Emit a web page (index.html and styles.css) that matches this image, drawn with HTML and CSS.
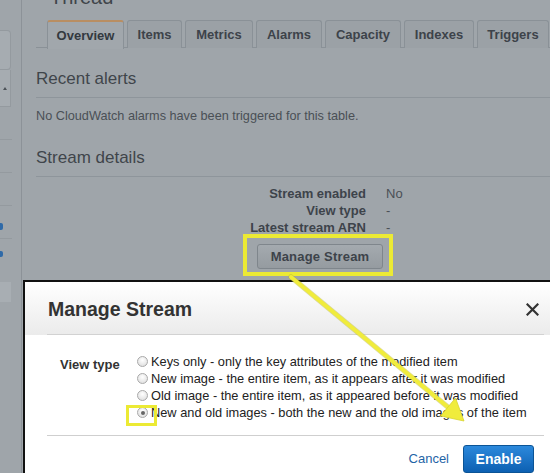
FILE: index.html
```html
<!DOCTYPE html>
<html>
<head>
<meta charset="utf-8">
<title>Manage Stream</title>
<link rel="stylesheet" href="styles.css">
</head>
<body>
<div class="page">
  <aside class="sidebar">
    <div class="sb-box sb-search"></div>
    <div class="sb-box sb-toggle"><span class="caret"></span></div>
    <div class="sb-item"></div>
    <div class="sb-item"></div>
    <div class="sb-item"></div>
    <div class="sb-item"><span class="sb-mark sb-mark-1"></span></div>
    <div class="sb-item sb-last"><span class="sb-mark sb-mark-2"></span></div>
    <div class="sb-box sb-bottom"></div>
  </aside>
  <main class="main">
    <h1 class="title">Thread</h1>
    <nav class="tabs">
      <span class="tab active">Overview</span>
      <span class="tab">Items</span>
      <span class="tab">Metrics</span>
      <span class="tab">Alarms</span>
      <span class="tab">Capacity</span>
      <span class="tab">Indexes</span>
      <span class="tab">Triggers</span>
    </nav>
    <section class="section">
      <h2 class="heading">Recent alerts</h2>
      <p class="note">No CloudWatch alarms have been triggered for this table.</p>
    </section>
    <section class="section">
      <h2 class="heading heading-2">Stream details</h2>
      <div class="kv">
        <span class="k">Stream enabled</span><span class="v">No</span>
        <span class="k">View type</span><span class="v">-</span>
        <span class="k">Latest stream ARN</span><span class="v">-</span>
      </div>
      <div class="btn-row">
        <button class="btn mark-btn">Manage Stream</button>
      </div>
    </section>
  </main>
</div>

<div class="modal">
  <header class="modal-header">
    <div class="modal-header-inner">
      <h3 class="modal-title">Manage Stream</h3>
      <svg class="close" width="13" height="13" viewBox="0 0 13 13"><path d="M1.5 1.5 L11.5 11.5 M11.5 1.5 L1.5 11.5" stroke="#333" stroke-width="2.2" stroke-linecap="square"/></svg>
    </div>
  </header>
  <div class="modal-body">
    <div class="form-row">
      <span class="form-label">View type</span>
      <div class="radios">
        <label class="radio-row"><span class="radio"></span>Keys only - only the key attributes of the modified item</label>
        <label class="radio-row"><span class="radio"></span>New image - the entire item, as it appears after it was modified</label>
        <label class="radio-row"><span class="radio"></span>Old image - the entire item, as it appeared before it was modified</label>
        <label class="radio-row"><span class="radio checked mark-radio"></span>New and old images - both the new and the old images of the item</label>
      </div>
    </div>
  </div>
  <div class="modal-divider"></div>
  <footer class="modal-footer">
    <a class="cancel">Cancel</a>
    <button class="enable">Enable</button>
  </footer>
</div>

<svg class="arrow" width="550" height="473" viewBox="0 0 550 473">
  <line x1="291" y1="277" x2="449" y2="408" stroke="#b8b52a" stroke-width="5.5" stroke-linecap="round" opacity="0.45"/>
  <line x1="291" y1="277" x2="449" y2="408" stroke="#f0ec3c" stroke-width="4" stroke-linecap="round"/>
  <polygon points="464,421 440.5,416 455.5,398" fill="#f0ec3c" stroke="#d8d430" stroke-width="0.8"/>
</svg>
</body>
</html>
```

FILE: styles.css
```css
* { box-sizing: border-box; }

html, body {
  margin: 0;
  padding: 0;
  width: 550px;
  height: 473px;
  overflow: hidden;
  background: #9fa5aa;
  font-family: "Liberation Sans", Arial, Helvetica, sans-serif;
  color: #3f454b;
}

.page {
  display: flex;
  height: 473px;
}

/* sidebar */
.sidebar {
  width: 22px;
  flex: none;
  border-right: 1px solid #8c9298;
  display: flex;
  flex-direction: column;
}
.sb-box {
  width: 11px;
  background: #a6acb1;
  border: 1px solid #949a9f;
  border-left: none;
}
.sb-search {
  margin-top: 30px;
  height: 40px;
  border-radius: 0 4px 4px 0;
}
.sb-toggle {
  height: 37px;
  border-top: none;
  display: flex;
  align-items: center;
  justify-content: center;
}
.caret {
  width: 0;
  height: 0;
  border-left: 2.5px solid transparent;
  border-right: 2.5px solid transparent;
  border-bottom: 3px solid #4c5258;
}
.sb-item {
  height: 33px;
  width: 12px;
  border-bottom: 1px solid #949a9f;
  position: relative;
}
.sb-last { border-bottom: none; height: 43px; }
.sb-mark {
  position: absolute;
  left: 0;
  width: 3px;
  background: #2f6aa8;
  border-radius: 0 2px 2px 0;
}
.sb-mark-1 { top: 17px; height: 7px; }
.sb-mark-2 { top: 12px; height: 6px; }
.sb-bottom {
  height: 20px;
  background: #a8aeb3;
  border: none;
}

/* main */
.main {
  flex: 1;
  padding-left: 14px;
  min-width: 0;
}
.title {
  margin: -15px 0 0 14px;
  height: 24px;
  font-size: 20px;
  line-height: 24px;
  font-weight: normal;
  color: #3f454b;
}
.tabs {
  margin-top: 11px;
  padding-left: 11px;
  display: flex;
  gap: 3px;
  border-bottom: 1px solid #8a9197;
  height: 28px;
}
.tab {
  height: 28px;
  padding: 0 8px;
  display: flex;
  align-items: center;
  justify-content: center;
  font-size: 13px;
  font-weight: bold;
  color: #3d434a;
  background: #9ba1a6;
  border: 1px solid #8a9197;
  border-bottom: none;
  border-radius: 3px 3px 0 0;
  white-space: nowrap;
}
.tab:nth-child(1) { width: 77px; }
.tab:nth-child(2) { width: 55px; }
.tab:nth-child(3) { width: 68px; }
.tab:nth-child(4) { width: 66px; }
.tab:nth-child(5) { width: 76px; }
.tab:nth-child(6) { width: 70px; }
.tab:nth-child(7) { width: 72px; }
.tab.active {
  background: #a1a7ac;
  border-top: 2px solid #b98e62;
  height: 29px;
  color: #33393f;
  margin-bottom: -1px;
}

.heading {
  margin: 21px 0 0 0;
  padding-bottom: 8px;
  font-size: 17px;
  line-height: 20px;
  font-weight: normal;
  color: #3f454b;
  border-bottom: 1px solid #8e959b;
}
.heading-2 { margin-top: 24px; }
.note {
  margin: 10px 0 0 0;
  font-size: 12.7px;
  line-height: 16px;
  color: #4a5056;
}

.kv {
  margin-top: 8px;
  display: grid;
  grid-template-columns: 330px 1fr;
  column-gap: 20px;
  font-size: 13px;
  line-height: 17px;
}
.k {
  text-align: right;
  font-weight: bold;
  color: #3d434a;
}
.v { color: #4a5056; }

.btn-row {
  margin-top: 8px;
  padding-left: 221px;
  display: flex;
}
.btn {
  position: relative;
  width: 126px;
  height: 25px;
  padding: 0;
  font-family: inherit;
  font-size: 13px;
  font-weight: bold;
  letter-spacing: 0.2px;
  color: #3d434a;
  background: linear-gradient(#a4aaaf, #959ba0);
  border: 1px solid #7f868c;
  border-radius: 3px;
}
.mark-btn::after {
  content: "";
  position: absolute;
  left: -15px;
  right: -11px;
  top: -11px;
  bottom: -8px;
  border: 4px solid #ecea34;
}

/* modal */
.modal {
  position: absolute;
  left: 23px;
  top: 280px;
  width: 545px;
  height: 220px;
  background: #fff;
  border: 2px solid #111;
}
.modal-header {
  padding: 0 22px;
  background: linear-gradient(#ffffff, #ebebeb);
}
.modal-header-inner {
  height: 53px;
  padding-top: 2px;
  border-bottom: 1px solid #d2d2d2;
  display: flex;
  align-items: center;
  justify-content: space-between;
}
.modal-title {
  margin: 0 0 0 1px;
  font-size: 19.5px;
  line-height: 22px;
  font-weight: bold;
  color: #333;
}
.close { margin-right: 5px; }

.modal-body { padding: 18px 22px 0; }
.form-row {
  display: flex;
  padding-left: 13px;
}
.form-label {
  width: 77px;
  flex: none;
  padding-top: 3px;
  font-size: 13px;
  line-height: 17px;
  font-weight: bold;
  color: #333;
}
.radios { display: flex; flex-direction: column; }
.radio-row {
  height: 17px;
  display: flex;
  align-items: center;
  font-size: 12.8px;
  color: #222;
  white-space: nowrap;
}
.radio {
  position: relative;
  width: 11px;
  height: 11px;
  margin-right: 3px;
  border-radius: 50%;
  border: 1px solid #a9a9a9;
  background: radial-gradient(circle at 50% 35%, #ffffff, #d9d9d9);
  flex: none;
}
.radio.checked::before {
  content: "";
  position: absolute;
  left: 2.5px;
  top: 2.5px;
  width: 4px;
  height: 4px;
  border-radius: 50%;
  background: #666;
}
.mark-radio::after {
  content: "";
  position: absolute;
  left: -12px;
  right: -10px;
  top: -3px;
  bottom: -9px;
  border: 3px solid #ecea34;
}

.modal-divider {
  margin: 14px 22px 0;
  border-top: 1px solid #cfcfcf;
}
.modal-footer {
  padding: 9px 32px 0 0;
  display: flex;
  justify-content: flex-end;
  align-items: center;
  gap: 14px;
}
.cancel {
  font-size: 13px;
  color: #1f64a6;
  margin-top: -2px;
}
.enable {
  height: 28px;
  width: 71px;
  padding: 0;
  font-family: inherit;
  font-size: 14px;
  font-weight: bold;
  color: #fff;
  background: linear-gradient(#2c89dc, #0d60b2);
  border: 1px solid #0b5496;
  border-radius: 3px;
}

.arrow {
  position: absolute;
  left: 0;
  top: 0;
  pointer-events: none;
}
```
